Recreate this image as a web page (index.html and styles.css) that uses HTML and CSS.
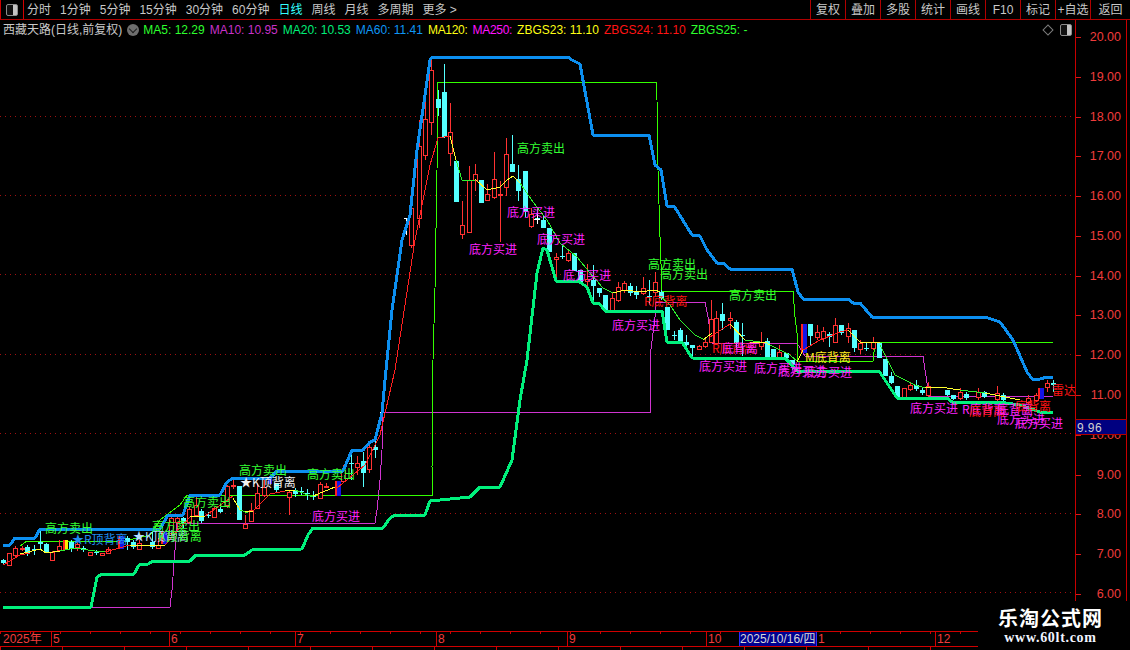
FILE: index.html
```html
<!DOCTYPE html>
<html lang="zh-CN">
<head>
<meta charset="utf-8">
<title>西藏天路 日线</title>
<link rel="stylesheet" href="styles.css">
</head>
<body>
<div class="app">
  <header class="toolbar">
    <div class="tool-toggle"><span class="panel-icon"></span></div>
    <nav class="periods">
      <span>分时</span><span>1分钟</span><span>5分钟</span><span>15分钟</span><span>30分钟</span><span>60分钟</span>
      <span class="active">日线</span><span>周线</span><span>月线</span><span>多周期</span><span>更多 &gt;</span>
    </nav>
    <nav class="actions">
      <span>复权</span><span>叠加</span><span>多股</span><span>统计</span><span>画线</span><span>F10</span><span>标记</span><span>+自选</span><span>返回</span>
    </nav>
  </header>

  <main class="workspace">
    <section class="chart">
      <svg class="plot" width="1075" height="611" viewBox="0 20 1075 611" xmlns="http://www.w3.org/2000/svg">
        <path class="grid" d="M0 116H1075M0 195H1075M0 274H1075M0 354H1075M0 433H1075M0 513H1075M0 592H1075"/>

        <!-- channel lines -->
        <polyline class="thin-magenta" points="91,607 170,607 172,590 175,550 177,523 375,523 377,510 380,480 382,450 383,412 650,412 650,357 655,317 656,302 705,302 708,317 712,343 797,343 803,353 805,356 923,356 927,383 928,396 1053,396"/>
        <polyline class="thin-green" points="20,546 27,541 125,541 150,535 160,520 180,505 187,495 432,495 432,467 433,360 435,288 437,170 438,82 656,82 657,100 658,170 660,237 662,291 793,291 795,317 797,333 798,361 873,361 875,343 880,342 1053,342"/>

        <!-- candle wicks -->
        <path class="wick-red" d="M15 546V557M22 546V551M52 551V561M59 540V552M77 540V551M108 547V554M139 540V550M158 538V549M171 515V535M177 516V532M189 507V523M196 495V517M214 507V518M227 485V508M233 480V489M245 515V529M251 503V521M257 483V509M264 480V497M289 490V515M320 482V499M326 483V488M343 465V482M357 456V475M369 445V473M411 206V248M419 120V228M425 92V160M431 60V135M450 103V166M462 201V239M469 166V232M475 164V191M487 184V201M494 152V199M500 181V242M506 138V196M531 208V228M556 253V277M568 250V262M587 264V287M612 292V310M618 282V302M624 281V293M643 277V295M655 272V297M699 345V350M705 338V348M711 300V343M716 311V345M730 312V329M761 332V350M779 345V358M817 325V340M823 327V342M835 318V343M848 323V343M860 340V354M873 337V350M910 383V391M928 382V397M960 388V400M978 388V400M997 386V401M1028 395V404M1036 393V402M1047 380V392"/>
        <path class="wick-cyan" d="M3 559V565M27 545V556M34 545V555M40 530V550M46 543V553M71 540V552M83 546V552M96 550V555M127 536V550M133 540V549M152 532V549M183 517V528M201 509V523M208 512V518M220 507V513M276 483V492M295 488V497M301 487V495M307 489V500M313 491V500M351 455V480M363 452V487M375 440V458M438 90V116M444 64V138M512 135V172M518 165V201M525 171V217M537 208V224M543 215V228M562 245V259M593 265V300M599 288V297M630 283V296M636 286V299M649 280V305M661 290V300M674 331V340M680 328V342M686 335V346M692 345V358M722 303V330M736 320V350M742 323V356M767 338V360M773 349V358M786 353V359M792 360V370M810 324V345M829 332V347M841 325V335M854 330V352M866 343V351M891 372V384M916 380V391M922 388V395M947 390V396M953 395V400M966 392V400M984 391V398M1003 393V401M1053 380V392"/>

        <!-- candle bodies -->
        <path class="body-cyan" d="M3 560V563M27 547V553M34 549V550M40 542V544M46 544V552M71 542V549M83 548V550M96 552V553M127 538V542M133 542V547M152 542V547M183 518V523M201 511V521M208 515V516M220 509V512M239 486V520M276 483V490M295 491V494M301 491V492M307 493V494M313 496V497M351 463V464M363 461V473M375 447V450M438 99V108M444 92V137M456 161V202M481 180V203M512 164V172M518 179V191M525 171V212M537 218V219M543 220V228M549 228V252M562 256V257M574 253V271M580 270V282M593 280V286M599 288V293M605 295V310M630 286V293M636 292V295M649 296V297M661 292V298M667 307V330M674 335V336M680 330V341M686 342V345M692 345V348M722 314V321M736 322V343M742 335V336M767 341V358M773 349V357M786 353V358M792 360V365M810 324V336M829 334V337M841 325V333M854 330V348M866 348V349M879 343V358M885 359V376M891 376V383M897 386V398M916 385V389M922 390V393M947 390V395M953 395V399M966 394V398M984 392V397M1003 395V400M1053 383V385"/>
        <path class="body-red" d="M7 553H11V565H7ZM13 548H17V555H13ZM20 548H24V549H20ZM50 552H54V560H50ZM57 546H61V550H57ZM75 544H79V547H75ZM88 552H92V555H88ZM100 553H104V555H100ZM106 549H110V553H106ZM137 543H141V549H137ZM156 545H160V548H156ZM169 518H173V533H169ZM175 518H179V522H175ZM187 509H191V522H187ZM194 505H198V515H194ZM212 508H216V517H212ZM225 486H229V505H225ZM231 485H235V486H231ZM243 524H247V528H243ZM249 510H253V521H249ZM255 493H259V508H255ZM262 487H266V495H262ZM287 492H291V497H287ZM318 484H322V498H318ZM324 486H328V487H324ZM341 470H345V481H341ZM355 463H359V467H355ZM367 447H371V469H367ZM409 208H413V245H409ZM417 146H421V218H417ZM423 119H427V155H423ZM429 70H433V122H429ZM448 132H452V153H448ZM460 225H464V234H460ZM467 180H471V232H467ZM473 174H477V180H473ZM485 194H489V200H485ZM492 179H496V197H492ZM498 194H502V195H498ZM504 154H508V187H504ZM529 214H533V226H529ZM554 257H558V259H554ZM566 253H570V260H566ZM585 279H589V281H585ZM610 298H614V310H610ZM616 287H620V300H616ZM622 283H626V290H622ZM641 288H645V293H641ZM653 282H657V292H653ZM697 346H701V349H697ZM703 342H707V346H703ZM709 319H713V342H709ZM714 318H718V343H714ZM728 318H732V320H728ZM759 342H763V346H759ZM777 352H781V357H777ZM815 332H819V337H815ZM821 331H825V338H821ZM833 325H837V342H833ZM846 328H850V336H846ZM858 343H862V349H858ZM871 342H875V348H871ZM902 388H906V397H902ZM908 385H912V389H908ZM926 386H930V395H926ZM958 392H962V398H958ZM976 392H980V397H976ZM995 393H999V399H995ZM1026 398H1030V402H1026ZM1034 395H1038V400H1034ZM1045 383H1049V387H1045Z"/>
        <path class="mark-red" d="M119 536V549M162 532V544M336 481V496M802 324V353M1039 388V399M64 540V550"/>
        <path class="mark-blue" d="M122 536V549M165 532V544M339 481V496M805 324V353M1042 388V399M270 478V484"/>
        <path class="mark-yellow" d="M66 540V550"/>
        <path class="cross" d="M537 215V224M534 219H540M380 412H383M406 218V235M404 218H408"/>

        <!-- multi-coloured average -->
        <polyline class="avg-red" points="3,565 20,555 30,553"/>
        <polyline class="avg-yellow" points="20,554 40,549 46,553 60,551"/>
        <polyline class="avg-green" points="60,551 75,548 95,551 105,552"/>
        <polyline class="avg-red" points="105,552 130,545"/>
        <polyline class="avg-yellow" points="130,545 165,545"/>
        <polyline class="avg-red" points="165,545 180,528 190,517"/>
        <polyline class="avg-yellow" points="190,517 205,516"/>
        <polyline class="avg-red" points="205,516 233,496"/>
        <polyline class="avg-yellow" points="233,498 240,510"/>
        <polyline class="avg-green" points="240,510 248,513"/>
        <polyline class="avg-yellow" points="245,511 253,511"/>
        <polyline class="avg-red" points="253,511 270,494 285,491"/>
        <polyline class="avg-yellow" points="285,491 295,490"/>
        <polyline class="avg-green" points="295,490 313,497"/>
        <polyline class="avg-yellow" points="313,496 335,487"/>
        <polyline class="avg-red" points="337,488 365,465 380,435 395,370 415,240 430,165 438,138 450,136"/>
        <polyline class="avg-yellow" points="450,136 456,160"/>
        <polyline class="avg-green" points="456,160 462,180 475,180"/>
        <polyline class="avg-yellow" points="475,179 487,190 500,187 507,180 513,176 520,183"/>
        <polyline class="avg-green" points="520,183 533,202 547,220 560,243 577,257 590,273 603,288 613,293"/>
        <polyline class="avg-yellow" points="613,293 625,290 640,292 655,290 660,292"/>
        <polyline class="avg-green" points="660,296 670,305 680,320 695,335 705,340"/>
        <polyline class="avg-yellow" points="703,340 712,333"/>
        <polyline class="avg-red" points="710,337 730,324"/>
        <polyline class="avg-yellow" points="730,324 745,340"/>
        <polyline class="avg-green" points="745,340 760,342"/>
        <polyline class="avg-yellow" points="750,342 765,342 770,345"/>
        <polyline class="avg-green" points="770,345 790,355 798,362"/>
        <polyline class="avg-yellow" points="797,362 803,350"/>
        <polyline class="avg-red" points="803,350 820,340 840,332 848,330"/>
        <polyline class="avg-yellow" points="848,330 860,342 880,342"/>
        <polyline class="avg-green" points="880,345 895,375 915,385 925,388"/>
        <polyline class="avg-yellow" points="925,387 940,387 960,390"/>
        <polyline class="avg-green" points="960,390 985,393"/>
        <polyline class="avg-yellow" points="985,393 1020,400"/>

        <!-- thick envelope -->
        <polyline class="line-blue" points="3,545 10,545 15,538 35,538 40,529 160,529 168,515 183,515 190,495 220,495 227,482 233,478 270,478 277,471 343,471 352,450 363,450 370,442 375,440 382,413 385,380 392,310 402,240 410,215 417,150 425,95 430,60 432,57 568,57 572,60 580,64 593,135 649,135 655,165 661,170 667,206 674,206 692,235 700,236 707,250 717,263 723,263 730,269 792,269 798,292 803,299 848,299 853,303 860,303 872,317 985,317 1000,322 1013,340 1027,372 1033,380 1040,379 1047,377 1053,377"/>
        <polyline class="line-green" points="3,607 91,607 97,577 102,574 134,574 139,565 148,564 153,561 190,561 196,555 245,555 252,550 302,549 308,535 313,528 383,528 390,518 395,515 425,515 430,501 440,500 470,497 480,487 500,487 512,460 520,400 527,360 537,273 543,248 547,250 556,281 578,281 587,287 593,303 599,303 605,311 662,311 667,342 682,342 692,358 786,359 792,365 797,371 879,371 897,398 947,398 952,402 998,402 1020,405 1040,412 1053,412"/>

        <!-- signal labels -->
        <g class="labels">
          <text class="sell" x="45" y="533">高方卖出</text>
          <text class="sell" x="239" y="475">高方卖出</text>
          <text class="sell" x="307" y="479">高方卖出</text>
          <text class="sell" x="183" y="507">高方卖出</text>
          <text class="sell" x="152" y="531">高方卖出</text>
          <text class="sell" x="517" y="153">高方卖出</text>
          <text class="sell" x="648" y="269">高方卖出</text>
          <text class="sell" x="660" y="279">高方卖出</text>
          <text class="sell" x="729" y="300">高方卖出</text>

          <text class="diverge-blue" x="72" y="544">★R顶背离</text>
          <text class="diverge-pale" x="133" y="541">★K顶背离</text>
          <text class="sell" x="158" y="541">K顶背离</text>
          <text class="diverge-white" x="240" y="487">★K顶背离</text>

          <text class="buy" x="312" y="521">底方买进</text>
          <text class="buy" x="469" y="254">底方买进</text>
          <text class="buy" x="507" y="217">底方买进</text>
          <text class="buy" x="537" y="244">底方买进</text>
          <text class="buy" x="563" y="280">底方买进</text>
          <text class="buy" x="612" y="330">底方买进</text>
          <text class="buy" x="699" y="371">底方买进</text>
          <text class="buy" x="754" y="373">底方买进</text>
          <text class="buy" x="778" y="376">底方买进</text>
          <text class="buy" x="804" y="377">底方买进</text>
          <text class="buy" x="910" y="413">底方买进</text>
          <text class="buy" x="997" y="424">底方买进</text>
          <text class="buy" x="1015" y="428">底方买进</text>

          <text class="diverge-red" x="644" y="306">R底背离</text>
          <text class="diverge-red" x="712" y="353">R底背离</text>
          <text class="diverge-magenta" x="722" y="353">底背离</text>
          <text class="diverge-yellow" x="805" y="362">M底背离</text>
          <text class="diverge-magenta" x="962" y="414">R底背离</text>
          <text class="diverge-red" x="969" y="416">底背离</text>
          <text class="diverge-magenta" x="997" y="414">底背离</text>
          <text class="diverge-red" x="1015" y="411">底背离</text>
          <text class="diverge-red" x="1052" y="395">雷达</text>
        </g>
      </svg>

      <div class="legend">
        <span class="stock">西藏天路(日线,前复权)</span>
        <span class="chevron"></span>
        <span class="c-lime">MA5: 12.29</span>
        <span class="c-violet">MA10: 10.95</span>
        <span class="c-mint">MA20: 10.53</span>
        <span class="c-blue">MA60: 11.41</span>
        <span class="c-yellow tight">MA120:</span>
        <span class="c-magenta tight">MA250:</span>
        <span class="c-yellow">ZBGS23: 11.10</span>
        <span class="c-red">ZBGS24: 11.10</span>
        <span class="c-lime">ZBGS25: -</span>
        <span class="legend-tools"><span class="diamond"></span><span class="panel-icon"></span></span>
      </div>
    </section>

    <aside class="axis">
      <div class="scale">
        <span>20.00</span><span>19.00</span><span>18.00</span><span>17.00</span><span>16.00</span>
        <span>15.00</span><span>14.00</span><span>13.00</span><span>12.00</span><span>11.00</span>
        <span>10.00</span><span>9.00</span><span>8.00</span><span>7.00</span><span>6.00</span>
      </div>
      <div class="cursor-price">9.96</div>
    </aside>
  </main>

  <footer class="timeline">
    <div class="months">
      <span class="month first">2025年</span>
      <span class="month m5">5</span>
      <span class="month m6">6</span>
      <span class="month m7">7</span>
      <span class="month m8">8</span>
      <span class="month m9">9</span>
      <span class="month m10">10</span>
      <span class="cursor-date">2025/10/16/四</span>
      <span class="month m11">1</span>
      <span class="month m12">12</span>
    </div>
    <div class="sub-panel"></div>
  </footer>

  <div class="watermark">
    <strong>乐淘公式网</strong>
    <span>www.60lt.com</span>
  </div>
</div>
</body>
</html>
```

FILE: styles.css
```css
* { box-sizing: border-box; }

html, body {
  margin: 0;
  width: 1130px;
  height: 650px;
  overflow: hidden;
  background: #000;
}

.app {
  position: relative;
  width: 1130px;
  height: 650px;
  display: flex;
  flex-direction: column;
  font: 12px/1 "Liberation Sans", "Noto Sans CJK SC", sans-serif;
  color: #c8c8c8;
  background: #000;
}

/* toolbar */
.toolbar {
  flex: 0 0 20px;
  display: flex;
  align-items: stretch;
  border-bottom: 1px solid #b00000;
}

.tool-toggle {
  width: 24px;
  display: flex;
  align-items: center;
  justify-content: center;
  border-right: 1px solid #d00000;
  border-left: 1px solid #d00000;
}

.panel-icon {
  display: block;
  width: 12px;
  height: 12px;
  border: 1px solid #8c8c8c;
  border-radius: 2px;
  background: linear-gradient(90deg, #111 0 58%, #c4c4c4 58% 100%);
}

.periods {
  display: flex;
  align-items: center;
  gap: 9px;
  padding-left: 3px;
}

.periods .active { color: #3ff; }

.actions {
  margin-left: auto;
  display: flex;
}

.actions span {
  width: 35px;
  display: flex;
  align-items: center;
  justify-content: center;
  border-left: 1px solid #b00000;
  white-space: nowrap;
}

.actions span:last-child { width: 40px; }

/* main */
.workspace {
  flex: 0 0 611px;
  display: flex;
}

.chart {
  position: relative;
  width: 1075px;
  height: 611px;
  overflow: hidden;
}

.plot {
  display: block;
  shape-rendering: crispEdges;
}

.plot polyline, .plot path { fill: none; }

.grid { stroke: #a01010; stroke-dasharray: 1 4; }

.thin-magenta { stroke: #d034d0; stroke-width: 1; }
.thin-green { stroke: #3f0; stroke-width: 1; }

.wick-red { stroke: #ff3232; stroke-width: 1; }
.wick-cyan { stroke: #54ffff; stroke-width: 1; }
.plot .body-cyan { stroke: #54ffff; stroke-width: 5; }
.plot .body-red { stroke: #ff3232; fill: #000; stroke-width: 1; }
.mark-red { stroke: #ff2020; stroke-width: 2; }
.mark-blue { stroke: #1414e6; stroke-width: 4; }
.mark-yellow { stroke: #ffee00; stroke-width: 3; }
.cross { stroke: #fff; stroke-width: 1; }

.avg-red { stroke: #ff2020; stroke-width: 1; }
.avg-yellow { stroke: #ffff30; stroke-width: 1; }
.avg-green { stroke: #2ef02e; stroke-width: 1; }

.line-blue { stroke: #0c8ff0; stroke-width: 3; stroke-linejoin: round; }
.line-green { stroke: #00f07c; stroke-width: 3; stroke-linejoin: round; }

.labels text {
  font: 12px "Noto Sans CJK SC", "Liberation Sans", sans-serif;
  shape-rendering: auto;
}

.sell { fill: #3f3; }
.buy { fill: #ff22ff; }
.diverge-blue { fill: #1e8cf0; }
.diverge-pale { fill: #b4dcff; }
.diverge-white { fill: #f0f0f0; }
.diverge-red { fill: #ff1414; }
.diverge-magenta { fill: #ff22ff; }
.diverge-yellow { fill: #ffee20; }

/* legend */
.legend {
  position: absolute;
  top: 0;
  left: 0;
  right: 0;
  height: 19px;
  display: flex;
  align-items: center;
  gap: 5px;
  padding-left: 3px;
  white-space: nowrap;
}

.stock { color: #c8c8c8; }

.chevron {
  position: relative;
  width: 12px;
  height: 12px;
  border-radius: 50%;
  background: #6e6e6e;
  margin-right: -1px;
}

.chevron::after {
  content: "";
  position: absolute;
  left: 3px;
  top: 2px;
  width: 5px;
  height: 5px;
  border-right: 1px solid #1c1c1c;
  border-bottom: 1px solid #1c1c1c;
  transform: rotate(45deg);
}

.tight { letter-spacing: -.3px; }

.c-lime { color: #2eff2e; }
.c-violet { color: #c832c8; }
.c-mint { color: #00ee78; }
.c-blue { color: #0f96f5; }
.c-yellow { color: #ffff14; }
.c-magenta { color: #ff14ff; }
.c-red { color: #ff1414; }

.legend-tools {
  margin-left: auto;
  margin-right: 3px;
  display: flex;
  align-items: center;
  gap: 8px;
}

.diamond {
  width: 8px;
  height: 8px;
  border: 1px solid #7c7c7c;
  transform: rotate(45deg);
}

/* price axis */
.axis {
  position: relative;
  width: 52px;
  height: 611px;
  border-left: 1px solid #c80000;
  border-right: 1px solid #c80000;
}

.scale {
  display: flex;
  flex-direction: column;
  padding-top: 7px;
  color: #f03c3c;
}

.scale span {
  position: relative;
  height: 39.79px;
  line-height: 20px;
  text-align: right;
  padding-right: 5px;
  font-size: 12.5px;
}

.scale span::before {
  content: "";
  position: absolute;
  left: 0;
  top: 10px;
  width: 5px;
  height: 1px;
  background: #d81818;
}

.cursor-price {
  position: absolute;
  top: 399px;
  left: -1px;
  width: 52px;
  height: 16px;
  padding: 2px 0 0 1px;
  background: #000080;
  border: 1px solid #b00000;
  color: #d0d0d0;
  letter-spacing: .4px;
}

/* time axis */
.timeline {
  flex: 0 0 19px;
  display: flex;
  flex-direction: column;
}

.months {
  height: 16px;
  display: flex;
  border-top: 1px solid #d00000;
  border-bottom: 1px solid #d00000;
  color: #f03c3c;
  background-image: repeating-linear-gradient(90deg, #d00000 0 1px, transparent 1px 30px);
  background-size: 100% 2px;
  background-repeat: no-repeat;
}

.month {
  height: 14px;
  line-height: 14px;
  padding-left: 1px;
  border-left: 1px solid #d00000;
}

.first { width: 51px; border-left: 0; padding-left: 3px; }
.m5 { width: 118px; }
.m6 { width: 126px; }
.m7 { width: 141px; }
.m8 { width: 131px; }
.m9 { width: 139px; }
.m10 { width: 33px; }
.m11 { width: 118px; border-left: 0; }
.m12 { width: 44px; }

.cursor-date {
  width: 78px;
  height: 14px;
  line-height: 14px;
  background: #000090;
  color: #d8d8d8;
  border: 1px solid #2c2cff;
  border-width: 0 1px;
  white-space: nowrap;
  overflow: hidden;
}

.sub-panel {
  flex: 1;
  background-image: repeating-linear-gradient(90deg, #d00000 0 1px, transparent 1px 62px);
}

/* watermark */
.watermark {
  position: absolute;
  left: 978px;
  top: 601px;
  width: 152px;
  height: 49px;
  display: flex;
  flex-direction: column;
  align-items: center;
  padding: 5px 7px 0 0;
  background: #000;
  color: #fff;
}

.watermark strong {
  font: 700 20px/24px "Noto Sans CJK SC", sans-serif;
  letter-spacing: 1px;
}

.watermark span {
  font: 700 14px/15px "Liberation Serif", serif;
  letter-spacing: .7px;
  color: #f0f4ff;
}
```
